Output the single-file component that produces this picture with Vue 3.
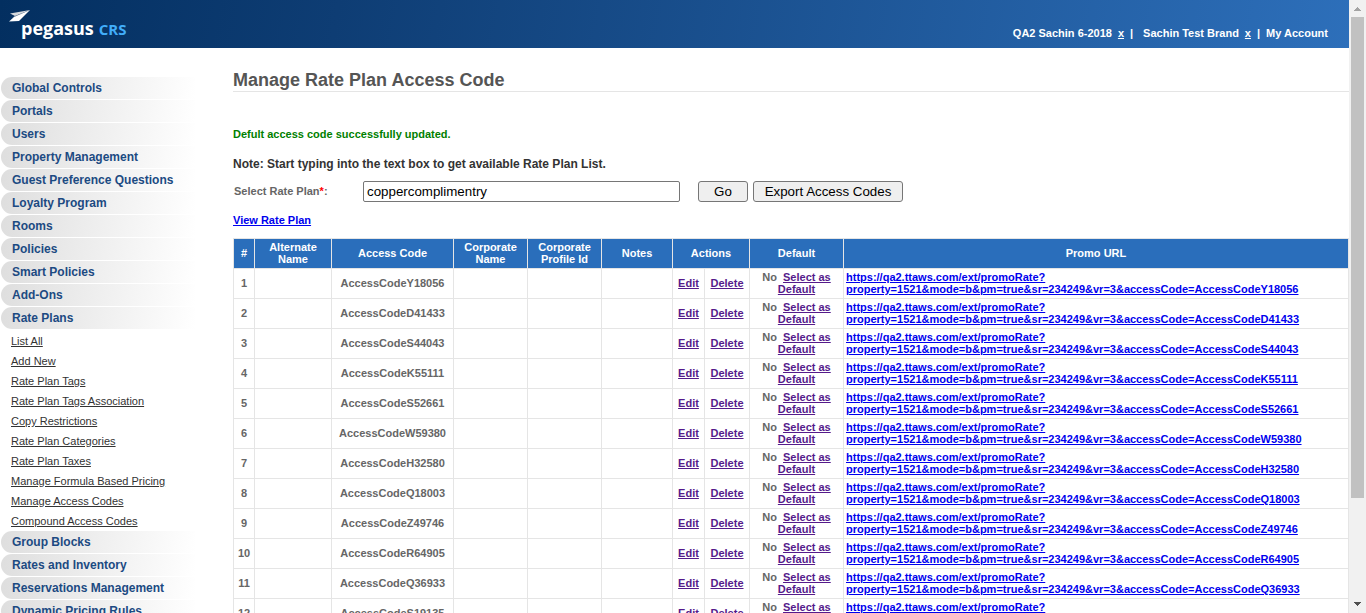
<script setup>
import { ref } from 'vue'

const ratePlan = ref('coppercomplimentry')
const menuTop = ['Global Controls', 'Portals', 'Users', 'Property Management', 'Guest Preference Questions', 'Loyalty Program', 'Rooms', 'Policies', 'Smart Policies', 'Add-Ons', 'Rate Plans']
const subMenu = ['List All', 'Add New', 'Rate Plan Tags', 'Rate Plan Tags Association', 'Copy Restrictions', 'Rate Plan Categories', 'Rate Plan Taxes', 'Manage Formula Based Pricing', 'Manage Access Codes', 'Compound Access Codes']
const menuBottom = ['Group Blocks', 'Rates and Inventory', 'Reservations Management', 'Dynamic Pricing Rules']
const codes = ['Y18056', 'D41433', 'S44043', 'K55111', 'S52661', 'W59380', 'H32580', 'Q18003', 'Z49746', 'R64905', 'Q36933', 'S19135'].map((c) => 'AccessCode' + c)
</script>

<template>
  <div class="window">
    <div class="page">
      <header class="top">
        <a class="logo" href="#" aria-label="pegasus CRS">
          <svg class="plane" width="22" height="12" viewBox="0 0 22 12" aria-hidden="true">
            <path d="M21 0 1 3.500 6 6Z" fill="#d5d8dc" />
            <path d="M21 0 6 6 3 8Z" fill="#8f99a8" />
            <path d="M21 0 5 7 0 11.500 10 11Z" fill="#fff" />
          </svg>
          <span class="brand">pegasus</span><span class="crs">CRS</span>
        </a>
        <nav class="account">
          <span>QA2 Sachin 6-2018</span><a class="close" href="#">x</a><span class="bar">|</span>
          <span class="second">Sachin Test Brand</span><a class="close" href="#">x</a><span class="bar">|</span>
          <a class="mine" href="#">My Account</a>
        </nav>
      </header>
      <div class="body">
        <nav class="side">
          <a v-for="m in menuTop" :key="m" class="item" href="#">{{ m }}</a>
          <div class="sub">
            <a v-for="s in subMenu" :key="s" href="#">{{ s }}</a>
          </div>
          <a v-for="m in menuBottom" :key="m" class="item" href="#">{{ m }}</a>
        </nav>
        <main class="content">
          <h1>Manage Rate Plan Access Code</h1>
          <p class="success">Defult access code successfully updated.</p>
          <p class="note">Note: Start typing into the text box to get available Rate Plan List.</p>
          <form class="form" @submit.prevent>
            <label for="plan">Select Rate Plan<span class="star">*</span>:</label>
            <input id="plan" v-model="ratePlan" type="text" />
            <button class="go" type="submit">Go</button>
            <button class="export" type="button">Export Access Codes</button>
          </form>
          <a class="view" href="#">View Rate Plan</a>
          <table>
            <colgroup>
              <col class="c-num" /><col class="c-alt" /><col class="c-code" /><col class="c-corp" /><col class="c-corp" />
              <col class="c-notes" /><col class="c-edit" /><col class="c-del" /><col class="c-def" /><col />
            </colgroup>
            <thead>
              <tr>
                <th>#</th>
                <th>Alternate Name</th>
                <th>Access Code</th>
                <th>Corporate Name</th>
                <th>Corporate Profile Id</th>
                <th>Notes</th>
                <th colspan="2">Actions</th>
                <th>Default</th>
                <th>Promo URL</th>
              </tr>
            </thead>
            <tbody>
              <tr v-for="(c, i) in codes" :key="c">
                <td>{{ i + 1 }}</td>
                <td></td>
                <td>{{ c }}</td>
                <td></td>
                <td></td>
                <td></td>
                <td><a class="visited" href="#">Edit</a></td>
                <td><a class="visited" href="#">Delete</a></td>
                <td>No &nbsp;<a class="visited" href="#">Select as Default</a></td>
                <td class="url"><a href="#">https://qa2.ttaws.com/ext/promoRate?<br />property=1521&amp;mode=b&amp;pm=true&amp;sr=234249&amp;vr=3&amp;accessCode={{ c }}</a></td>
              </tr>
            </tbody>
          </table>
        </main>
      </div>
    </div>
    <div class="scroll" aria-hidden="true">
      <svg width="17" height="17" viewBox="0 0 17 17"><path d="M5 11h7v-1h-1V9h-1V8H9V7H8v1H7v1H6v1H5z" fill="#a3a3a3" /></svg>
      <div class="track"><div class="thumb"></div></div>
      <svg width="17" height="17" viewBox="0 0 17 17"><path d="M5 6h7v1h-1v1h-1v1H9v1H8V9H7V8H6V7H5z" fill="#505050" /></svg>
    </div>
  </div>
</template>

<style>
body {
  margin: 0;
  background: #fff;
}
</style>

<style scoped>
.window {
  display: flex;
  height: 100vh;
  overflow: hidden;
  font-family: "Liberation Sans", Arial, sans-serif;
  font-size: 11px;
  line-height: 12px;
  color: #666;
}
.page {
  flex: 1;
  min-width: 0;
  overflow: hidden;
}
.top {
  height: 48px;
  display: flex;
  justify-content: space-between;
  background: linear-gradient(100deg, #032f60 0%, #0e3d74 25%, #2d6fba 100%);
  color: #fff;
}
.logo {
  position: relative;
  display: flex;
  align-items: baseline;
  padding: 17px 0 0 21px;
  line-height: 22px;
  color: #fff;
  text-decoration: none;
}
.plane {
  position: absolute;
  left: 9px;
  top: 10px;
}
.brand {
  font-family: "Open Sans", sans-serif;
  font-size: 18px;
  font-weight: 700;
}
.crs {
  margin-left: 5px;
  font-family: "Open Sans", sans-serif;
  font-size: 15px;
  font-weight: 700;
  color: #41aefa;
}
.account {
  display: flex;
  padding: 27px 21px 0 0;
  font-weight: bold;
}
.account a {
  color: #fff;
}
.close {
  margin-left: 6px;
}
.bar {
  margin-left: 6px;
}
.second {
  margin-left: 10px;
}
.account .mine {
  margin-left: 6px;
  text-decoration: none;
}
.body {
  display: flex;
}
.side {
  flex: none;
  width: 233px;
  padding-top: 29px;
}
.item {
  display: block;
  width: 194px;
  height: 22px;
  margin: 0 0 1px 1px;
  padding-left: 11px;
  box-sizing: border-box;
  border-radius: 11px 0 0 11px;
  background: linear-gradient(100deg, #dedede 0%, #ededed 45%, #fff 100%);
  font-size: 12px;
  font-weight: bold;
  line-height: 22px;
  color: #1c4a82;
  text-decoration: none;
  white-space: nowrap;
}
.sub {
  padding: 1px 0 0 11px;
}
.sub a {
  display: table;
  line-height: 20px;
  color: #333;
}
.content {
  flex: 1;
  min-width: 0;
}
h1 {
  margin: 21px 0 0;
  height: 22px;
  border-bottom: 1px solid #e5e5e5;
  font-size: 18px;
  line-height: 22px;
  color: #555;
}
p {
  margin: 0;
  font-weight: bold;
}
.success {
  padding-top: 36px;
  color: green;
}
.note {
  padding-top: 17px;
  font-size: 12px;
  line-height: 14px;
  color: #333;
}
.form {
  display: flex;
  align-items: center;
  height: 22px;
  margin-top: 9px;
}
label {
  width: 130px;
  padding-left: 1px;
  box-sizing: border-box;
  font-weight: bold;
}
.star {
  color: #f00;
}
input {
  width: 317px;
  height: 21px;
  padding: 1px 3px;
  box-sizing: border-box;
  border: 1px solid #767676;
  border-radius: 2px;
  background: #fff;
  color: #000;
  font-family: "Liberation Sans", Arial, sans-serif;
}
button {
  height: 21px;
  padding: 0;
  border: 1px solid #767676;
  border-radius: 3px;
  background: #efefef;
  color: #000;
  font-family: "Liberation Sans", Arial, sans-serif;
}
.go {
  width: 50px;
  margin-left: 18px;
}
.export {
  width: 150px;
  margin-left: 5px;
}
.view {
  display: table;
  margin: 12px 0;
  font-weight: bold;
  color: #00e;
}
table {
  width: 100%;
  table-layout: fixed;
  border-collapse: collapse;
}
th,
td {
  height: 24px;
  padding: 2px 2px 3px;
  border: 1px solid #e5e5e5;
  font-weight: bold;
  text-align: center;
  vertical-align: middle;
}
th {
  background: #2a6ebb;
  color: #fff;
}
td.url {
  text-align: left;
  white-space: nowrap;
}
td a {
  color: #00e;
}
td .visited {
  color: #551a8b;
}
.c-num { width: 21px; }
.c-alt { width: 77px; }
.c-code { width: 122px; }
.c-corp { width: 74px; }
.c-notes { width: 71px; }
.c-edit { width: 32px; }
.c-del { width: 45px; }
.c-def { width: 94px; }
.scroll {
  flex: none;
  width: 17px;
  display: flex;
  flex-direction: column;
  background: #f1f1f1;
}
.scroll svg {
  display: block;
}
.track {
  flex: 1;
}
.thumb {
  height: 83%;
  margin: 0 2px;
  background: #c1c1c1;
}
</style>
